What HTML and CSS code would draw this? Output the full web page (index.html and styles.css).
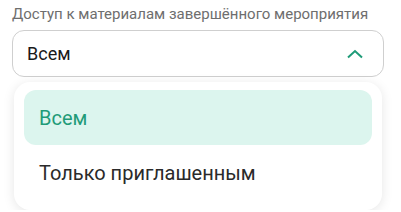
FILE: index.html
```html
<!DOCTYPE html>
<html lang="ru">
<head>
<meta charset="utf-8">
<link rel="stylesheet" href="styles.css">
</head>
<body>
<div class="field">
  <div class="label">Доступ к материалам завершённого мероприятия</div>
  <div class="select">
    <span class="value">Всем</span>
    <svg class="chev" width="18" height="10" viewBox="0 0 18 10"><path d="M2 8.5 L9 2 L16 8.5" fill="none" stroke="#1f9b78" stroke-width="2"/></svg>
  </div>
  <div class="menu">
    <div class="opt active">Всем</div>
    <div class="opt">Только приглашенным</div>
  </div>
</div>
</body>
</html>
```
FILE: styles.css
```css
html, body { margin: 0; padding: 0; background: #fff; }
body { font-family: Roboto, "Noto Sans", sans-serif; }
.field { padding: 4px 17px 0 12px; }
.label { font-size: 15px; line-height: 20px; color: #6e6e6e; height: 26px; }
.select {
  height: 47px; box-sizing: border-box;
  border: 1px solid #cfcfcf; border-radius: 12px;
  display: flex; align-items: center; justify-content: space-between;
  padding: 0 19px 0 14px;
}
.value { font-size: 18px; color: #1a1a1a; }
.chev { display: block; margin-top: 1px; }
.menu {
  margin: 5px 2px 0 2px; background: #fff; border-radius: 16px;
  box-shadow: 0 2px 12px rgba(0,0,0,0.10);
  padding: 8px 10px 10px 10px; height: 128px; box-sizing: border-box;
}
.opt { height: 55px; border-radius: 12px; display: flex; align-items: center; padding-left: 15px; font-size: 20px; color: #2a2a2a; }
.opt.active { background: #dcf5ee; color: #1f9b78; }
```
